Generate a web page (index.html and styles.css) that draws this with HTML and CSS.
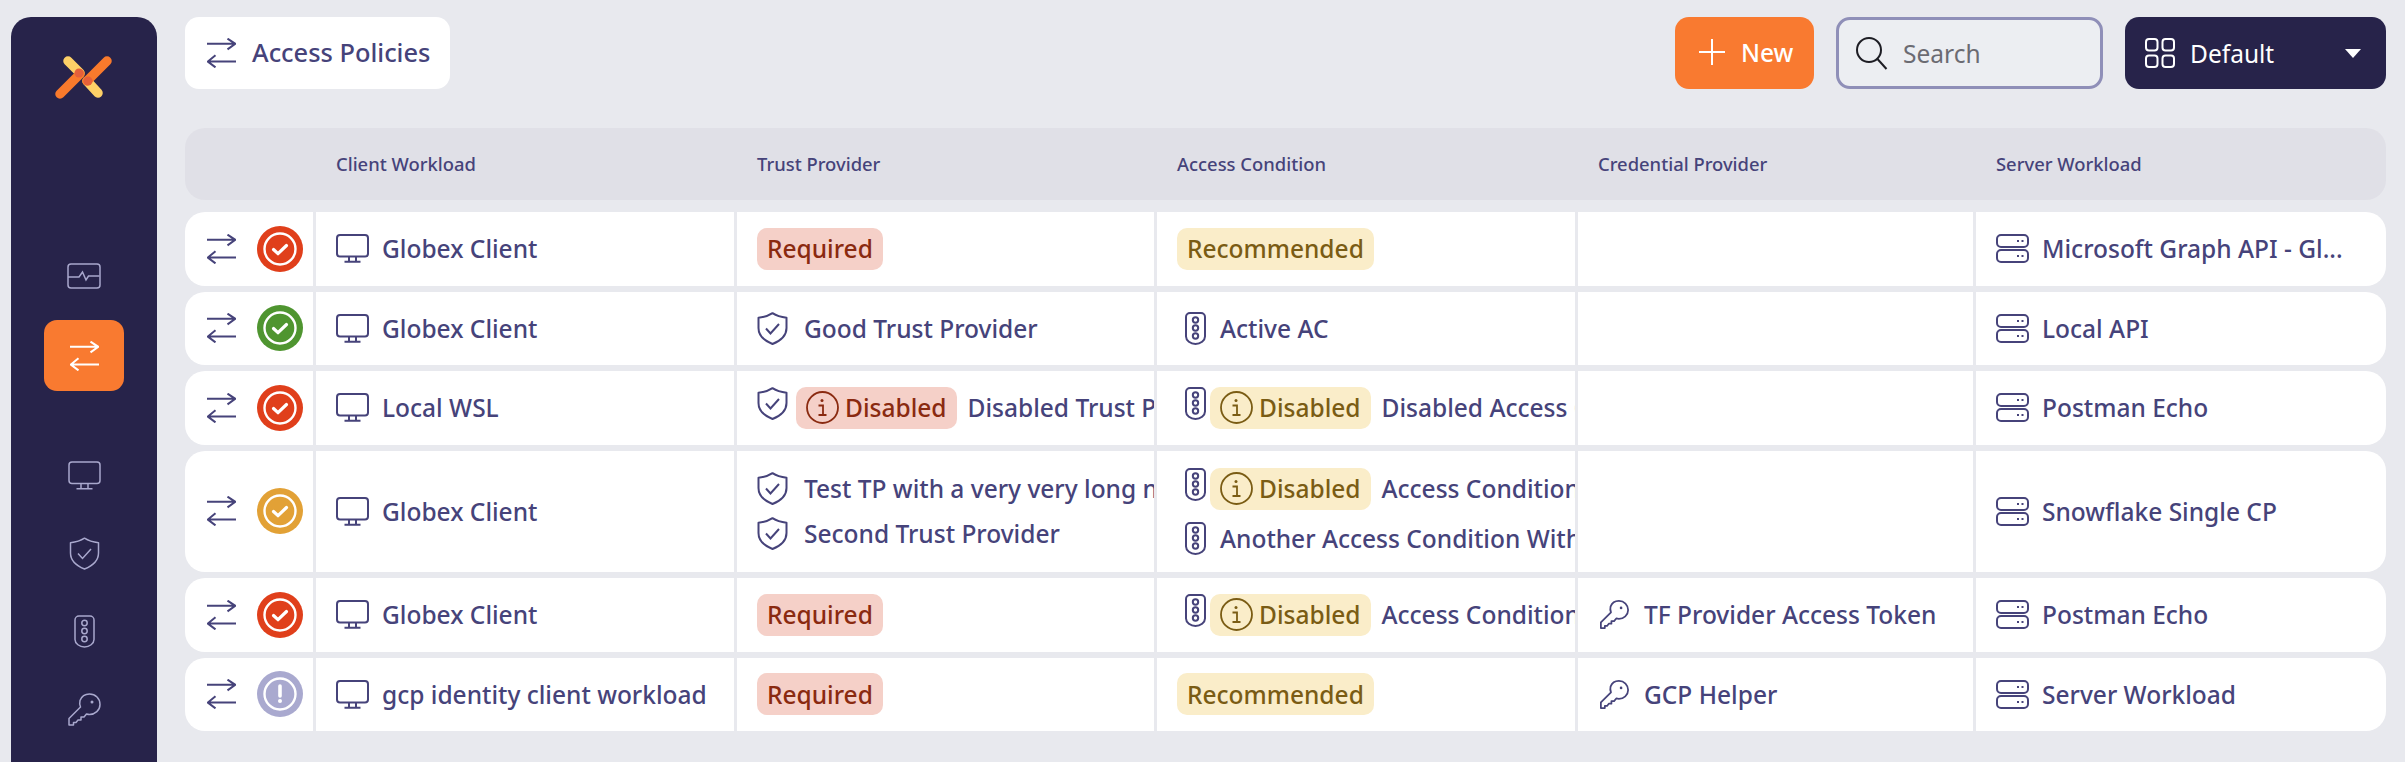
FILE: index.html
```html
<!DOCTYPE html>
<html lang="en">
<head>
<meta charset="utf-8">
<title>Access Policies</title>
<link rel="stylesheet" href="styles.css">
</head>
<body>
<svg class="sprite" aria-hidden="true">
  <symbol id="swap" viewBox="0 0 29 30"><path d="M0 5.8h28M20.5 .6l7.800 5.200-7.800 5.600M29 23.600H1M8.500 17.200L.8 23.600l7.700 5.800" fill="none" stroke="currentColor" stroke-width="2"/></symbol>
  <symbol id="monitor" viewBox="0 0 33 29"><rect x="1" y="1" width="31" height="21.500" rx="3" fill="none" stroke="currentColor"/><path d="M13 22.500v5M20 22.500v5M8.500 27.800h16" fill="none" stroke="currentColor"/></symbol>
  <symbol id="shield" viewBox="0 0 31 33"><path d="M15.500 1.200C19 3.500 25 5.300 29.500 5.800V16c0 7-6 12.800-14 16C7.500 28.800 1.500 23 1.500 16V5.800C6 5.300 12 3.500 15.500 1.200Z" fill="none" stroke="currentColor" stroke-linejoin="round"/><path d="M9 16.500l4.500 5L22 12" fill="none" stroke="currentColor"/></symbol>
  <symbol id="traffic" viewBox="0 0 21 33"><path d="M5 1h11a4 4 0 0 1 4 4v19.500c0 4-4.500 7.500-9.500 7.500S1 28.500 1 24.500V5a4 4 0 0 1 4-4Z" fill="none" stroke="currentColor"/><circle cx="10.500" cy="8" r="2.700" fill="none" stroke="currentColor"/><circle cx="10.500" cy="16" r="2.700" fill="none" stroke="currentColor"/><circle cx="10.500" cy="24" r="2.700" fill="none" stroke="currentColor"/></symbol>
  <symbol id="key" viewBox="0 0 33 33"><path d="M1 32v-6.500L12.500 14C11.500 11.500 11.500 9.500 12 7.500 13.500 3.500 17.500 1 21.500 1 27.500 1 32 5.500 32 11.500c0 5.800-5 10-10.500 10-1 0-2-.2-3-.5L16 24h-3v3h-3l-2 2.500H5.500V32Z" fill="none" stroke="currentColor" stroke-linejoin="round"/><circle cx="24" cy="9" r="1.500" fill="currentColor"/></symbol>
  <symbol id="server" viewBox="0 0 33 29"><rect x="1" y="1" width="31" height="12" rx="4" fill="none" stroke="currentColor" stroke-width="2"/><rect x="1" y="16" width="31" height="12" rx="4" fill="none" stroke="currentColor" stroke-width="2"/><path d="M21 7h2M25.500 7h2M21 22h2M25.500 22h2" stroke="currentColor" stroke-width="2"/></symbol>
  <symbol id="info" viewBox="0 0 33 33"><circle cx="16.500" cy="16.500" r="15.500" fill="none" stroke="currentColor" stroke-width="1.800"/><circle cx="16" cy="9.500" r="1.500" fill="currentColor"/><path d="M12.500 14.500h4.500v9M12.500 24h8" fill="none" stroke="currentColor" stroke-width="1.800"/></symbol>
  <symbol id="ok" viewBox="0 0 46 46"><circle cx="23" cy="23" r="15.500" fill="none" stroke="#fff" stroke-width="2.400"/><path d="M16.500 23.500l4.500 4.200 8.500-8.200" fill="none" stroke="#fff" stroke-width="3.200" stroke-linecap="round" stroke-linejoin="round"/></symbol>
  <symbol id="warn" viewBox="0 0 46 46"><circle cx="23" cy="23" r="15.500" fill="none" stroke="#fff" stroke-width="2.400"/><path d="M23 15v10" stroke="#fff" stroke-width="3.600" stroke-linecap="round"/><circle cx="23" cy="30" r="2" fill="#fff"/></symbol>
</svg>

<div class="app">
  <aside class="sidebar">
    <div class="logo">
      <svg width="58" height="44" viewBox="0 0 58 44"><path d="M13 5l12 12M32 25l11 12" stroke="#fdd067" stroke-width="9.500" stroke-linecap="round"/><path d="M5 38L25 18M52 5L32 25" stroke="#f97a2c" stroke-width="9.500" stroke-linecap="round"/><circle cx="24" cy="17" r="4.500" fill="#e5603a"/><circle cx="33" cy="25" r="4.500" fill="#e5603a"/></svg>
    </div>
    <div class="nav-item">
      <svg width="34" height="26" viewBox="0 0 34 26"><rect x="1" y="1" width="32" height="24" rx="3" fill="none" stroke="currentColor" stroke-width="1.500"/><path d="M1 14h8l3 0 3.500-5 3.500 8 2.500-4h11" fill="none" stroke="currentColor" stroke-width="1.500"/></svg>
    </div>
    <div class="nav-item nav-active"><svg class="ic-swap"><use href="#swap"/></svg></div>
    <div class="nav-group">
      <div class="nav-item"><svg class="ic-md"><use href="#monitor"/></svg></div>
      <div class="nav-item"><svg class="ic-md"><use href="#shield"/></svg></div>
      <div class="nav-item"><svg class="ic-md"><use href="#traffic"/></svg></div>
      <div class="nav-item"><svg class="ic-md"><use href="#key"/></svg></div>
    </div>
  </aside>

  <main class="main">
    <header class="topbar">
      <div class="title"><svg class="ic-swap"><use href="#swap"/></svg><span class="title-text">Access Policies</span></div>
      <div class="actions">
        <button class="btn-new"><svg width="28" height="28" viewBox="0 0 28 28"><path d="M14 1v26M1 14h26" stroke="#fff" stroke-width="2"/></svg><span>New</span></button>
        <div class="search">
          <svg width="34" height="34" viewBox="0 0 34 34"><circle cx="14" cy="14" r="12" fill="none" stroke="#1d1d24" stroke-width="2"/><path d="M22.500 23l9 10" stroke="#1d1d24" stroke-width="2"/></svg>
          <span>Search</span>
        </div>
        <div class="view">
          <svg width="30" height="30" viewBox="0 0 30 30"><rect x="1" y="1" width="11.500" height="11.500" rx="3" fill="none" stroke="#fff" stroke-width="2"/><rect x="17.500" y="1" width="11.500" height="11.500" rx="3" fill="none" stroke="#fff" stroke-width="2"/><rect x="1" y="17.500" width="11.500" height="11.500" rx="3" fill="none" stroke="#fff" stroke-width="2"/><rect x="17.500" y="17.500" width="11.500" height="11.500" rx="3" fill="none" stroke="#fff" stroke-width="2"/></svg>
          <span class="view-label">Default</span>
          <i class="caret"></i>
        </div>
      </div>
    </header>

    <section class="table">
      <div class="thead">
        <div></div>
        <div>Client Workload</div>
        <div>Trust Provider</div>
        <div>Access Condition</div>
        <div>Credential Provider</div>
        <div>Server Workload</div>
      </div>

      <div class="row">
        <div class="cell first"><svg class="ic-swap"><use href="#swap"/></svg><svg class="status red"><use href="#ok"/></svg></div>
        <div class="cell"><div class="item"><svg class="ic"><use href="#monitor"/></svg>Globex Client</div></div>
        <div class="cell"><span class="badge danger">Required</span></div>
        <div class="cell"><span class="badge warning">Recommended</span></div>
        <div class="cell"></div>
        <div class="cell"><div class="item"><svg class="ic"><use href="#server"/></svg>Microsoft Graph API - Gl...</div></div>
      </div>

      <div class="row">
        <div class="cell first"><svg class="ic-swap"><use href="#swap"/></svg><svg class="status green"><use href="#ok"/></svg></div>
        <div class="cell"><div class="item"><svg class="ic"><use href="#monitor"/></svg>Globex Client</div></div>
        <div class="cell"><div class="item"><svg class="ic-s"><use href="#shield"/></svg>Good Trust Provider</div></div>
        <div class="cell"><div class="item"><svg class="ic-t"><use href="#traffic"/></svg>Active AC</div></div>
        <div class="cell"></div>
        <div class="cell"><div class="item"><svg class="ic"><use href="#server"/></svg>Local API</div></div>
      </div>

      <div class="row">
        <div class="cell first"><svg class="ic-swap"><use href="#swap"/></svg><svg class="status red"><use href="#ok"/></svg></div>
        <div class="cell"><div class="item"><svg class="ic"><use href="#monitor"/></svg>Local WSL</div></div>
        <div class="cell"><div class="item top"><svg class="ic-s"><use href="#shield"/></svg><span class="badge danger"><svg class="ic-i"><use href="#info"/></svg>Disabled</span><span class="after">Disabled Trust Provider</span></div></div>
        <div class="cell"><div class="item top"><svg class="ic-t"><use href="#traffic"/></svg><span class="badge warning"><svg class="ic-i"><use href="#info"/></svg>Disabled</span><span class="after">Disabled Access Condition</span></div></div>
        <div class="cell"></div>
        <div class="cell"><div class="item"><svg class="ic"><use href="#server"/></svg>Postman Echo</div></div>
      </div>

      <div class="row tall">
        <div class="cell first"><svg class="ic-swap"><use href="#swap"/></svg><svg class="status amber"><use href="#ok"/></svg></div>
        <div class="cell"><div class="item"><svg class="ic"><use href="#monitor"/></svg>Globex Client</div></div>
        <div class="cell stack">
          <div class="item"><svg class="ic-s"><use href="#shield"/></svg>Test TP with a very very long name</div>
          <div class="item"><svg class="ic-s"><use href="#shield"/></svg>Second Trust Provider</div>
        </div>
        <div class="cell stack">
          <div class="item top"><svg class="ic-t"><use href="#traffic"/></svg><span class="badge warning"><svg class="ic-i"><use href="#info"/></svg>Disabled</span><span class="after">Access Condition</span></div>
          <div class="item"><svg class="ic-t"><use href="#traffic"/></svg>Another Access Condition With Long Name</div>
        </div>
        <div class="cell"></div>
        <div class="cell"><div class="item"><svg class="ic"><use href="#server"/></svg>Snowflake Single CP</div></div>
      </div>

      <div class="row">
        <div class="cell first"><svg class="ic-swap"><use href="#swap"/></svg><svg class="status red"><use href="#ok"/></svg></div>
        <div class="cell"><div class="item"><svg class="ic"><use href="#monitor"/></svg>Globex Client</div></div>
        <div class="cell"><span class="badge danger">Required</span></div>
        <div class="cell"><div class="item top"><svg class="ic-t"><use href="#traffic"/></svg><span class="badge warning"><svg class="ic-i"><use href="#info"/></svg>Disabled</span><span class="after">Access Condition</span></div></div>
        <div class="cell"><div class="item"><svg class="ic"><use href="#key"/></svg>TF Provider Access Token</div></div>
        <div class="cell"><div class="item"><svg class="ic"><use href="#server"/></svg>Postman Echo</div></div>
      </div>

      <div class="row">
        <div class="cell first"><svg class="ic-swap"><use href="#swap"/></svg><svg class="status gray"><use href="#warn"/></svg></div>
        <div class="cell"><div class="item"><svg class="ic"><use href="#monitor"/></svg>gcp identity client workload</div></div>
        <div class="cell"><span class="badge danger">Required</span></div>
        <div class="cell"><span class="badge warning">Recommended</span></div>
        <div class="cell"><div class="item"><svg class="ic"><use href="#key"/></svg>GCP Helper</div></div>
        <div class="cell"><div class="item"><svg class="ic"><use href="#server"/></svg>Server Workload</div></div>
      </div>
    </section>
  </main>
</div>
</body>
</html>
```
FILE: styles.css
```css
* { box-sizing: border-box; }

html, body {
  margin: 0;
  height: 100%;
  overflow: hidden;
}

body {
  background: #e8e9ee;
  color: #46437a;
  font-family: "Noto Sans", "Liberation Sans", sans-serif;
  font-size: 24.500px;
}

.sprite { display: none; }

.app {
  display: flex;
  height: 100vh;
  padding: 17px 19px 0 11px;
  gap: 28px;
}

/* Sidebar */
.sidebar {
  flex: 0 0 146px;
  background: #27234a;
  border-radius: 20px 20px 0 0;
  color: #a9a8cd;
  display: flex;
  flex-direction: column;
  align-items: center;
}

.logo {
  display: flex;
  justify-content: center;
  padding-top: 39px;
  height: 220px;
}

.nav-item {
  width: 80px;
  height: 78px;
  display: flex;
  align-items: center;
  justify-content: center;
  flex: none;
}

.nav-active {
  height: 71px;
  margin-top: 5px;
  background: #f97a30;
  border-radius: 13px;
  color: #fff;
}

.nav-group {
  margin-top: 45px;
  display: flex;
  flex-direction: column;
}

.ic-md { width: 33px; height: 33px; stroke-width: 1.500px; }
.ic-swap { width: 29px; height: 30px; flex: none; }

/* Main */
.main {
  flex: 1;
  min-width: 0;
  display: flex;
  flex-direction: column;
}

.topbar {
  display: flex;
  justify-content: space-between;
  height: 72px;
  margin-bottom: 39px;
}

.title {
  width: 265px;
  background: #fff;
  border-radius: 14px;
  display: flex;
  align-items: center;
  gap: 16px;
  padding-left: 22px;
  font-weight: 500;
  font-size: 25.400px;
  white-space: nowrap;
}

.title-text { padding-bottom: 3px; }

.actions {
  display: flex;
  gap: 22px;
}

.btn-new {
  width: 139px;
  border: 0;
  border-radius: 14px;
  background: #f97a30;
  color: #fff;
  font: inherit;
  font-weight: 500;
  display: flex;
  align-items: center;
  gap: 15px;
  padding: 0 0 2px 23px;
}

.search {
  width: 267px;
  border: 3px solid #8f8fb8;
  border-radius: 14px;
  background: #eceef2;
  display: flex;
  align-items: center;
  gap: 14px;
  padding-left: 16px;
  color: #6b6b72;
}

.view {
  width: 261px;
  background: #27234a;
  border-radius: 14px;
  color: #fff;
  display: flex;
  align-items: center;
  gap: 15px;
  padding: 0 25px 0 20px;
}

.view-label { flex: 1; }

.caret {
  width: 0;
  height: 0;
  border-left: 8px solid transparent;
  border-right: 8px solid transparent;
  border-top: 9px solid #fff;
}

/* Table */
.table {
  display: flex;
  flex-direction: column;
  gap: 6px;
}

.thead, .row {
  display: grid;
  grid-template-columns: 128px 421px 420px 421px 398px 1fr;
}

.thead {
  height: 72px;
  margin-bottom: 6px;
  padding-bottom: 2px;
  background: #e0e0e7;
  border-radius: 20px;
  align-items: center;
  font-size: 18.400px;
  font-weight: 500;
}

.thead > div { padding-left: 23px; }

.row {
  height: 73.500px;
  background: #fff;
  border-radius: 20px;
}

.tall { height: 121.500px; }

.cell {
  border-left: 3px solid #e8e9ee;
  padding-left: 20px;
  display: flex;
  align-items: center;
  overflow: hidden;
  white-space: nowrap;
  font-weight: 500;
}

.first {
  border-left: 0;
  padding-left: 22px;
  gap: 21px;
}

.stack {
  flex-direction: column;
  align-items: flex-start;
  justify-content: center;
  gap: 12px;
}

.item {
  display: flex;
  align-items: center;
  gap: 13px;
  stroke-width: 2px;
}

.item.top {
  gap: 8px;
  align-items: flex-start;
}

.after {
  align-self: center;
  margin-left: 3px;
}

.ic { width: 33px; height: 29px; flex: none; }
.ic-s { width: 31px; height: 33px; flex: none; margin-right: 3px; }
.ic-t { width: 21px; height: 33px; flex: none; margin: 0 1px 0 8px; }
.ic-i { width: 33px; height: 33px; flex: none; }

.item.top .ic-s { margin-right: 0; }
.item.top .ic-t { margin-right: -4px; }

.status {
  width: 46px;
  height: 46px;
  border-radius: 50%;
  flex: none;
}

.red { background: #e03f1b; }
.green { background: #4f9530; }
.amber { background: #e2a136; }
.gray { background: #a9a9cf; }

.badge {
  height: 42px;
  border-radius: 10px;
  padding: 0 10px;
  display: inline-flex;
  align-items: center;
  gap: 6px;
  flex: none;
}

.danger { background: #f5d0c8; color: #8a2a10; }
.warning { background: #faedc9; color: #7a5c14; }
```
